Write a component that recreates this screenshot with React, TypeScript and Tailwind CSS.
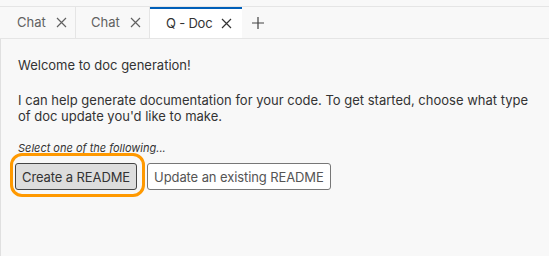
export default function App() {
  const font = { fontFamily: '-apple-system, "Inter", "Liberation Sans", sans-serif' };
  return (
    <div className="flex h-[256px] w-[549px] flex-col bg-[#f8f8f8] text-[#333]" style={font}>
      <div className="h-[7px] border-b border-[#e5e5e5]" />
      <div className="flex h-[32px] border-b border-[#e5e5e5]">
        <Tab label="Chat" width="w-[76px]" pad="pl-[17px]" />
        <Tab label="Chat" width="w-[74px]" pad="pl-[15px]" />
        <div className="flex w-[92px] items-center border-t-2 border-[#005fb8] bg-white pl-[16px] text-[13px] tracking-[-0.2px] text-[#333]">
          <span>Q - Doc</span>
          <XIcon className="ml-[9px] text-[#333]" />
        </div>
        <div className="flex w-[32px] items-center justify-center text-[#424242]">
          <svg width="14" height="14" viewBox="0 0 14 14" fill="none" stroke="currentColor" strokeWidth="1.2">
            <path d="M7 1v12M1 7h12" />
          </svg>
        </div>
      </div>
      <div className="flex-1 border-l border-[#e0e0e0] pl-[17px] pt-[18px] text-[13px] leading-[16px] text-[#333]">
        <p>Welcome to doc generation!</p>
        <p className="mt-[19px]">
          I can help generate documentation for your code. To get started, choose what type
          <br />
          of doc update you'd like to make.
        </p>
        <p className="mt-[17px] text-[11px] italic leading-[14px]">Select one of the following...</p>
        <div className="-mt-[2px] flex items-start">
          <div className="-ml-[8px] rounded-[12px] border-[3px] border-[#ff9900] pb-[4px] pl-[2px] pr-[5px] pt-[7px]">
            <button className="h-[27px] rounded-[3px] border border-[#444] bg-[#dddddd] px-[6px] text-[13px] tracking-[-0.1px] text-[#333]">
              Create a README
            </button>
          </div>
          <button className="ml-[2px] mt-[10px] h-[27px] rounded-[3px] border border-[#777] bg-white px-[6px] text-[13px] tracking-[-0.1px] text-[#555]">
            Update an existing README
          </button>
        </div>
      </div>
    </div>
  );
}

function Tab({ label, width, pad }: { label: string; width: string; pad: string }) {
  return (
    <div className={`flex ${width} ${pad} items-center border-r border-[#e5e5e5] text-[13px] text-[#616161]`}>
      <span>{label}</span>
      <XIcon className="ml-[10px] text-[#616161]" />
    </div>
  );
}

function XIcon({ className }: { className: string }) {
  return (
    <svg className={className} width="11" height="11" viewBox="0 0 11 11" fill="none" stroke="currentColor" strokeWidth="1.2">
      <path d="M1 1l9 9M10 1l-9 9" />
    </svg>
  );
}
